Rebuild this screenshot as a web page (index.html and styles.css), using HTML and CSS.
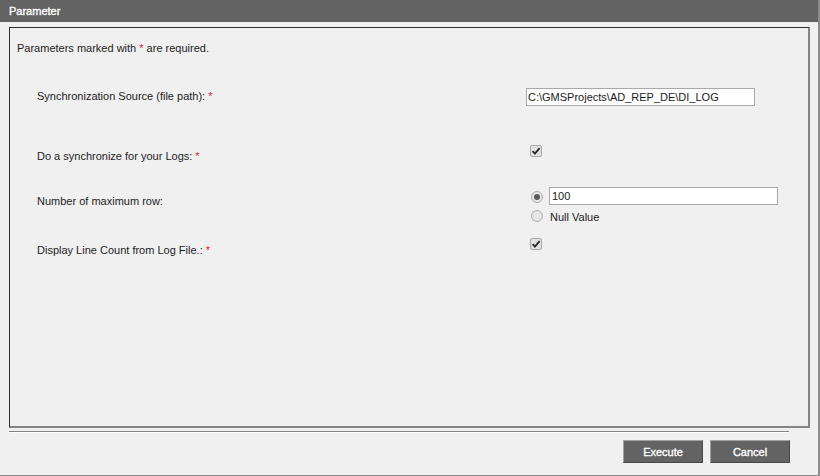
FILE: index.html
```html
<!DOCTYPE html>
<html>
<head>
<meta charset="utf-8">
<link rel="stylesheet" href="styles.css">
</head>
<body>
<div class="frame">
  <div class="titlebar">Parameter</div>
  <div class="panel">
    <p class="notice">Parameters marked with <span class="req">*</span> are required.</p>
    <div class="form">
      <div class="row row-text">
        <div class="label">Synchronization Source (file path): <span class="req">*</span></div>
        <div class="value"><input class="field field-path" type="text" value="C:\GMSProjects\AD_REP_DE\DI_LOG"></div>
      </div>
      <div class="row row-check row-sync">
        <div class="label">Do a synchronize for your Logs: <span class="req">*</span></div>
        <div class="value"><span class="check"><svg viewBox="0 0 12 12" width="12" height="12"><path d="M2.6 6.2 L4.9 8.6 L9.6 3.2" fill="none" stroke="#2b2b2b" stroke-width="1.9"/></svg></span></div>
      </div>
      <div class="row row-radio">
        <div class="label">Number of maximum row:</div>
        <div class="value">
          <div class="opt opt-input"><span class="radio on"></span><input class="field field-num" type="text" value="100"></div>
          <div class="opt opt-null"><span class="radio"></span><span class="opt-text">Null Value</span></div>
        </div>
      </div>
      <div class="row row-check row-display">
        <div class="label">Display Line Count from Log File.: <span class="req">*</span></div>
        <div class="value"><span class="check"><svg viewBox="0 0 12 12" width="12" height="12"><path d="M2.6 6.2 L4.9 8.6 L9.6 3.2" fill="none" stroke="#2b2b2b" stroke-width="1.9"/></svg></span></div>
      </div>
    </div>
  </div>
  <div class="separator"></div>
  <div class="actions">
    <button class="btn">Execute</button>
    <button class="btn">Cancel</button>
  </div>
</div>
</body>
</html>
```
FILE: styles.css
```css
html, body {
  margin: 0;
  padding: 0;
  background: #f0f0f0;
}
body {
  font-family: "Liberation Sans", Arial, sans-serif;
  font-size: 11px;
  color: #1c1c1c;
}
.frame {
  width: 818px;
  height: 475px;
  border-right: 2px solid #8c8c8c;
  border-bottom: 1px solid #8c8c8c;
  display: flex;
  flex-direction: column;
  overflow: hidden;
}
.titlebar {
  height: 22px;
  line-height: 22px;
  background: #636363;
  color: #ffffff;
  font-size: 11px;
  -webkit-text-stroke: 0.35px #ffffff;
  padding-left: 9px;
}
.panel {
  margin: 5px 0 0 9px;
  width: 798px;
  height: 398px;
  border-top: 1px solid #2e2e2e;
  border-left: 1px solid #2e2e2e;
  border-right: 2px solid #858585;
  border-bottom: 2px solid #858585;
  box-sizing: content-box;
}
.notice {
  margin: 13px 0 0 7px;
  line-height: 14px;
}
.req {
  color: #e4173f;
}
.form {
  display: flex;
  flex-direction: column;
  padding-left: 27px;
}
.row {
  display: grid;
  grid-template-columns: 489px 1fr;
  align-items: start;
}
.label {
  line-height: 14px;
}
.row-text {
  margin-top: 33px;
}
.row-text .label {
  padding-top: 1px;
}
.row-sync {
  margin-top: 39px;
}
.row-check .value {
  padding-left: 4px;
}
.row-sync .label {
  padding-top: 4px;
}
.row-radio {
  margin-top: 24px;
}
.row-radio .label {
  padding-top: 7px;
}
.row-display {
  margin-top: 16px;
}
.row-display .label {
  padding-top: 5px;
}
.field {
  box-sizing: border-box;
  height: 18px;
  margin: 0;
  border: 1px solid #a9a9a9;
  background: #ffffff;
  font-family: "Liberation Sans", Arial, sans-serif;
  font-size: 11px;
  color: #1c1c1c;
  padding: 0 1px;
  outline: none;
}
.field-path {
  width: 229px;
}
.field-num {
  width: 229px;
  padding-left: 2px;
}
.check {
  display: block;
  box-sizing: border-box;
  width: 12px;
  height: 12px;
  border: 1px solid #a8a8a8;
  border-radius: 2px;
  background: #e2e2e2;
  position: relative;
}
.check svg {
  position: absolute;
  left: -1px;
  top: -1px;
}
.opt {
  display: flex;
  align-items: center;
}
.opt-input .radio {
  margin-top: 1px;
}
.opt-null {
  margin-top: 4px;
  height: 13px;
}
.radio {
  display: block;
  box-sizing: border-box;
  width: 12px;
  height: 12px;
  border: 1px solid #adadad;
  border-radius: 50%;
  background: #e6e6e6;
  margin-left: 5px;
  margin-right: 6px;
  position: relative;
  flex: none;
}
.radio.on::after {
  content: "";
  position: absolute;
  left: 2px;
  top: 2px;
  width: 6px;
  height: 6px;
  border-radius: 50%;
  background: #5a5a5a;
}
.opt-null .radio {
  margin-right: 7px;
}
.opt-text {
  line-height: 14px;
  padding-top: 2px;
}
.separator {
  margin: 3px 0 0 9px;
  width: 780px;
  height: 1px;
  background: #858585;
  border-bottom: 1px solid #ffffff;
}
.actions {
  display: flex;
  gap: 7px;
  padding: 7px 0 0 623px;
}
.btn {
  box-sizing: border-box;
  width: 80px;
  height: 23px;
  margin: 0;
  padding: 0;
  background: #636363;
  color: #ffffff;
  font-family: "Liberation Sans", Arial, sans-serif;
  font-size: 11px;
  -webkit-text-stroke: 0.35px #ffffff;
  border-top: 1px solid #a2a2a2;
  border-left: 1px solid #a2a2a2;
  border-right: 1px solid #474747;
  border-bottom: 1px solid #474747;
}
```
